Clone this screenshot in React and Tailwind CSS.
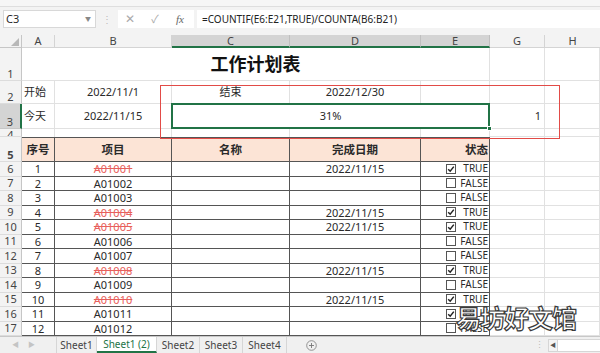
import React from "react";

const F = { fontFamily: '"Noto Sans", "Noto Sans CJK SC", sans-serif' };

const data = [
  [6, 1, "A01001", true, true],
  [7, 2, "A01002", false, false],
  [8, 3, "A01003", false, false],
  [9, 4, "A01004", true, true],
  [10, 5, "A01005", true, true],
  [11, 6, "A01006", false, false],
  [12, 7, "A01007", false, false],
  [13, 8, "A01008", true, true],
  [14, 9, "A01009", false, false],
  [15, 10, "A01010", true, true],
  [16, 11, "A01011", false, true],
  [17, 12, "A01012", false, false],
];

function Box({ checked }) {
  return (
    <svg width="10" height="10" viewBox="0 0 10 10" className="shrink-0">
      <rect x="0.5" y="0.5" width="9" height="9" fill="white" stroke="#555" strokeWidth="1" />
      {checked && <path d="M2.2 5.2 L4.2 7.2 L7.8 2.6" fill="none" stroke="#222" strokeWidth="1.5" />}
    </svg>
  );
}

function RH({ n, h, sel, align = "items-center" }) {
  return (
    <div
      className={`w-[22px] shrink-0 ${h} flex ${align} justify-center overflow-hidden text-[11px] leading-[12px] text-[#444] border-r border-b ${
        sel ? "bg-[#d4d4d4] border-r-[#217346] border-r-2 border-b-[#c6c6c6]" : "bg-[#f3f3f3] border-r-[#c6c6c6] border-b-[#dcdcdc]"
      }`}
    >
      {n}
    </div>
  );
}

const g = "border-r border-b border-[#e1e1e1]";

export default function App() {
  return (
    <div className="relative w-[600px] h-[353px] overflow-hidden bg-white text-[#2a2a2a]" style={F}>
      {/* top strip */}
      <div className="h-[7px] bg-[#f6f6f6] border-b border-[#dedede]" />
      {/* formula bar */}
      <div className="h-[28px] bg-[#f3f3f3] flex items-start pt-[3px]">
        <div className="ml-[3px] w-[93px] h-[18px] bg-white border border-[#d8d8d8] flex items-center justify-between pl-[2px] pr-[4px] text-[11px]">
          <span>C3</span>
          <span className="text-[6px] text-[#888]">▼</span>
        </div>
        <div className="w-[22px] h-[18px] flex items-center justify-center text-[10px] text-[#bbb]">⋮</div>
        <div className="w-[76px] h-[18px] bg-white flex items-center text-[#aaa]">
          <span className="w-[24px] text-center text-[12px]">✕</span>
          <span className="w-[26px] text-center text-[11px]">✓</span>
          <span className="w-[24px] text-center text-[11px] italic text-[#666]" style={{ fontFamily: '"Liberation Serif", serif' }}>
            fx
          </span>
        </div>
        <div className="ml-[3px] flex-1 h-[18px] bg-white flex items-center pl-[5px] text-[10px] text-[#222]">
          =COUNTIF(E6:E21,TRUE)/COUNTA(B6:B21)
        </div>
      </div>
      {/* column headers */}
      <div className="flex h-[13px] text-[11px] leading-[12px] text-[#444]">
        <div className="w-[22px] bg-[#f3f3f3] border-r border-b border-[#c6c6c6] relative">
          <svg width="8" height="8" className="absolute right-[2px] bottom-[1px]">
            <path d="M8 0 L8 8 L0 8 Z" fill="#b8b8b8" />
          </svg>
        </div>
        <div className="w-[33px] bg-[#f3f3f3] border-r border-b border-[#d4d4d4] flex items-center justify-center">A</div>
        <div className="w-[117px] bg-[#f3f3f3] border-r border-b border-[#d4d4d4] flex items-center justify-center">B</div>
        <div className="w-[118px] bg-[#d4d4d4] border-r border-r-[#c0c0c0] border-b-2 border-b-[#217346] flex items-center justify-center">C</div>
        <div className="w-[131px] bg-[#d4d4d4] border-r border-r-[#c0c0c0] border-b-2 border-b-[#217346] flex items-center justify-center">D</div>
        <div className="w-[69px] bg-[#d4d4d4] border-r border-r-[#c0c0c0] border-b-2 border-b-[#217346] flex items-center justify-center">E</div>
        <div className="w-[55px] bg-[#f3f3f3] border-r border-b border-[#d4d4d4] flex items-center justify-center">G</div>
        <div className="w-[55px] bg-[#f3f3f3] border-b border-[#d4d4d4] flex items-center justify-center">H</div>
      </div>

      {/* row 1 */}
      <div className="flex h-[33px]">
        <RH n="1" h="h-[33px]" align="items-end" />
        <div className={`w-[468px] ${g} flex items-center justify-center text-[18px] font-bold text-[#111]`}>工作计划表</div>
        <div className={`w-[55px] ${g}`} />
        <div className={`w-[55px] ${g}`} />
      </div>
      {/* row 2 */}
      <div className="flex h-[23px] text-[11px]">
        <RH n="2" h="h-[23px]" align="items-end" />
        <div className={`w-[33px] ${g} flex items-center pl-[2px]`}>开始</div>
        <div className={`w-[117px] ${g} flex items-center justify-center`}>2022/11/1</div>
        <div className={`w-[118px] ${g} flex items-center justify-center`}>结束</div>
        <div className={`w-[131px] ${g} flex items-center justify-center`}>2022/12/30</div>
        <div className={`w-[69px] ${g}`} />
        <div className={`w-[55px] ${g}`} />
        <div className={`w-[55px] ${g}`} />
      </div>
      {/* row 3 */}
      <div className="flex h-[25px] text-[11px]">
        <RH n="3" h="h-[25px]" align="items-end" sel />
        <div className={`w-[33px] ${g} flex items-center pl-[2px]`}>今天</div>
        <div className={`w-[117px] ${g} flex items-center justify-center`}>2022/11/15</div>
        <div className={`w-[318px] ${g} relative flex items-center justify-center`}>
          31%
          <div className="absolute -left-px -top-px -right-px -bottom-px border-2 border-[#217346]" />
          <div className="absolute -right-[3px] -bottom-[3px] w-[5px] h-[5px] bg-[#217346] border border-white" />
        </div>
        <div className={`w-[55px] ${g} flex items-center justify-end pr-[3px]`}>1</div>
        <div className={`w-[55px] ${g}`} />
      </div>
      {/* row 4 */}
      <div className="flex h-[8px]">
        <RH n="4" h="h-[8px]" align="items-start" />
        <div className="w-[33px] border-r border-[#e1e1e1]" />
        <div className="w-[117px] border-r border-[#e1e1e1]" />
        <div className="w-[118px] border-r border-[#e1e1e1]" />
        <div className="w-[131px] border-r border-[#e1e1e1]" />
        <div className="w-[69px] border-r border-[#e1e1e1]" />
        <div className={`w-[55px] ${g}`} />
        <div className={`w-[55px] ${g}`} />
      </div>
      {/* row 5 header */}
      <div className="flex h-[25px] text-[11.5px] font-bold">
        <RH n="5" h="h-[25px]" align="items-end" />
        <div className="w-[33px] bg-[#fce4d6] border-t border-r border-b border-[#555] flex items-center justify-center">序号</div>
        <div className="w-[117px] bg-[#fce4d6] border-t border-r border-b border-[#555] flex items-center justify-center">项目</div>
        <div className="w-[118px] bg-[#fce4d6] border-t border-r border-b border-[#555] flex items-center justify-center">名称</div>
        <div className="w-[131px] bg-[#fce4d6] border-t border-r border-b border-[#555] flex items-center justify-center">完成日期</div>
        <div className="w-[69px] bg-[#fce4d6] border-t border-r border-b border-[#555] flex items-center justify-end pr-[1px]">状态</div>
        <div className={`w-[55px] ${g}`} />
        <div className={`w-[55px] ${g}`} />
      </div>
      {/* data rows */}
      {data.map(([r, n, code, done, chk]) => (
        <div key={r} className="flex h-[14.5px] text-[11px] leading-[13px]">
          <RH n={r} h="h-[14.5px]" />
          <div className="w-[33px] border-r border-b border-[#555] flex items-center justify-center">{n}</div>
          <div
            className={`w-[117px] border-r border-b border-[#555] flex items-center justify-center ${
              done ? "text-[#e8605c] line-through" : ""
            }`}
          >
            {code}
          </div>
          <div className="w-[118px] border-r border-b border-[#555]" />
          <div className="w-[131px] border-r border-b border-[#555] flex items-center justify-center">
            {done ? "2022/11/15" : ""}
          </div>
          <div className="w-[69px] border-r border-b border-[#555] flex items-center pl-[25px]">
            <Box checked={chk} />
            <span className="flex-1 text-right pr-[1px] text-[10px]">{chk ? "TRUE" : "FALSE"}</span>
          </div>
          <div className={`w-[55px] ${g}`} />
          <div className={`w-[55px] ${g}`} />
        </div>
      ))}

      {/* sheet tabs */}
      <div className="absolute left-0 right-0 bottom-0 h-[17px] bg-[#f0f0f0] border-t border-[#c8c8c8] flex items-stretch text-[10px] text-[#444]">
        <div className="w-[57px] flex items-center text-[7px] text-[#c4c4c4] pl-[12px] gap-[9px] border-r border-[#d6d6d6]">
          <span>◀</span>
          <span>▶</span>
        </div>
        <div className="w-[40px] flex items-center justify-center border-r border-[#d6d6d6]">Sheet1</div>
        <div className="w-[60px] flex items-center justify-center bg-white text-[#217346] border-r border-[#d6d6d6] border-b-2 border-b-[#217346]">
          Sheet1 (2)
        </div>
        <div className="w-[43px] flex items-center justify-center border-r border-[#d6d6d6]">Sheet2</div>
        <div className="w-[43px] flex items-center justify-center border-r border-[#d6d6d6]">Sheet3</div>
        <div className="w-[44px] flex items-center justify-center border-r border-[#d6d6d6]">Sheet4</div>
        <div className="w-[48px] flex items-center justify-center">
          <svg width="11" height="11" viewBox="0 0 11 11">
            <circle cx="5.5" cy="5.5" r="4.8" fill="none" stroke="#888" strokeWidth="0.9" />
            <path d="M5.5 3 V8 M3 5.5 H8" stroke="#777" strokeWidth="0.9" />
          </svg>
        </div>
        <div className="flex-1 flex items-center justify-end">
          <span className="text-[9px] text-[#bbb] mr-[4px]">⋮</span>
          <div className="w-[10px] h-[13px] flex items-center justify-center text-[6px] text-[#555] border border-[#d6d6d6] bg-[#f4f4f4]">◀</div>
          <div className="w-[42px] h-[13px] bg-white border-y border-[#d6d6d6]" />
        </div>
      </div>

      {/* red annotation rectangle */}
      <div className="absolute left-[160px] top-[85px] w-[400px] h-[54px] border-[1.5px] border-[#e24b47]" />

      {/* watermark */}
      <div
        className="absolute left-[456px] top-[302px] text-[25px] leading-[30px] font-bold text-white tracking-[-1px] [-webkit-text-stroke:1.2px_#3a3a3a]"
        style={{ fontFamily: '"Noto Sans CJK SC", sans-serif' }}
      >
        易坊好文馆
      </div>
    </div>
  );
}
